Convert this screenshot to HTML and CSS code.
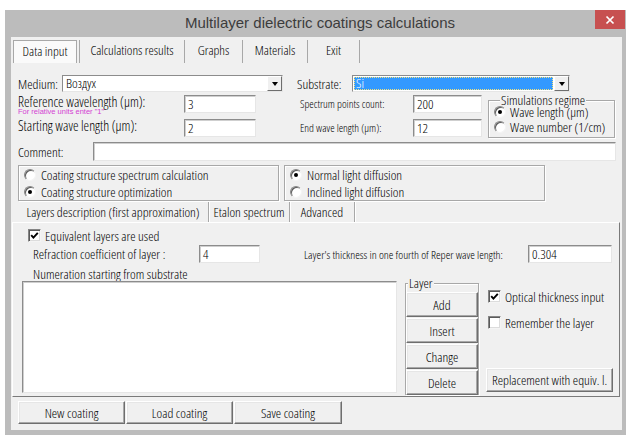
FILE: index.html
```html
<!DOCTYPE html>
<html>
<head>
<meta charset="utf-8">
<title>Multilayer dielectric coatings calculations</title>
<link rel="stylesheet" href="styles.css">
</head>
<body>
<div class="window">
  <div class="titlebar">
    <span class="title">Multilayer dielectric coatings calculations</span>
    <span class="close"><svg width="10" height="10" viewBox="0 0 10 10"><path d="M1.5 1.5L8.5 8.5M8.5 1.5L1.5 8.5" stroke="#fff" stroke-width="1.7"/></svg></span>
  </div>
  <div class="client">
    <div class="tabs">
      <div class="tab active">Data input</div>
      <div class="tab t2">Calculations results</div>
      <div class="tab t3">Graphs</div>
      <div class="tab t4">Materials</div>
      <div class="tab t5">Exit</div>
    </div>

    <div class="page">
      <div class="row-medium">
        <span class="w-medium">Medium:</span>
        <div class="combo combo-medium"><span class="combo-text">Воздух</span><span class="combo-btn"><i class="arrow"></i></span></div>
        <span class="w-substrate">Substrate:</span>
        <div class="combo combo-substrate"><span class="combo-text sel">Si</span><span class="combo-btn"><i class="arrow"></i></span></div>
      </div>

      <div class="params">
        <div class="a-ref"><span class="ref-lbl">Reference wavelength (µm):</span><span class="hint">For relative units enter "1"</span></div>
        <div class="edit a-refin">3</div>
        <span class="lbl-r a-spec">Spectrum points count:</span>
        <div class="edit a-specin">200</div>
        <div class="group a-sim">
          <span class="group-title">Simulations regime</span>
          <label class="opt opt-sim"><span class="radio on"></span>Wave length (µm)</label>
          <label class="opt opt-sim"><span class="radio"></span>Wave number (1/cm)</label>
        </div>
        <span class="ref-lbl a-start">Starting wave length (µm):</span>
        <div class="edit a-startin">2</div>
        <span class="lbl-r a-end">End wave length (µm):</span>
        <div class="edit a-endin">12</div>
      </div>

      <div class="row-comment">
        <span class="w-comment">Comment:</span>
        <div class="edit comment-in"></div>
      </div>

      <div class="modes">
        <div class="group mode1">
          <label class="opt"><span class="radio"></span>Coating structure spectrum calculation</label>
          <label class="opt"><span class="radio on"></span>Coating structure optimization</label>
        </div>
        <div class="group mode2">
          <label class="opt"><span class="radio on"></span>Normal light diffusion</label>
          <label class="opt"><span class="radio"></span>Inclined light diffusion</label>
        </div>
      </div>

      <div class="subtabs">
        <div class="subtab active s1">Layers description (first approximation)</div>
        <div class="subtab s2">Etalon spectrum</div>
        <div class="subtab s3">Advanced</div>
      </div>

      <div class="panel">
        <label class="chk-row eq-row"><span class="check"><svg width="9" height="9" viewBox="0 0 9 9"><path d="M1.2 4.2L3.4 6.6L7.8 1.8" fill="none" stroke="#000" stroke-width="1.9"/></svg></span>Equivalent layers are used</label>

        <div class="refr-row">
          <span class="w-refr">Refraction coefficient of layer :</span>
          <div class="edit refr-in">4</div>
          <span class="w-thick">Layer's thickness in one fourth of Reper wave length:</span>
          <div class="edit thick-in">0.304</div>
        </div>

        <div class="num-lbl">Numeration starting from substrate</div>

        <div class="layers-area">
          <div class="listbox"></div>
          <div class="group layer-group">
            <span class="group-title">Layer</span>
            <div class="btn lbtn">Add</div>
            <div class="btn lbtn">Insert</div>
            <div class="btn lbtn">Change</div>
            <div class="btn lbtn">Delete</div>
          </div>
          <div class="right-col">
            <label class="chk-row opt-chk"><span class="check"><svg width="9" height="9" viewBox="0 0 9 9"><path d="M1.2 4.2L3.4 6.6L7.8 1.8" fill="none" stroke="#000" stroke-width="1.9"/></svg></span>Optical thickness input</label>
            <label class="chk-row rem-chk"><span class="check"></span>Remember the layer</label>
            <div class="btn replace">Replacement with equiv. l.</div>
          </div>
        </div>
      </div>

      <div class="bottom-btns">
        <div class="btn bb1">New coating</div>
        <div class="btn bb2">Load coating</div>
        <div class="btn bb3">Save coating</div>
      </div>
    </div>
  </div>
</div>
</body>
</html>
```

FILE: styles.css
```css
* { box-sizing: border-box; }

html, body {
  margin: 0;
  padding: 0;
  background: #fff;
}

body {
  font-family: "Open Sans", "Liberation Sans", Arial, sans-serif;
  font-stretch: 75%;
  font-weight: 300;
  font-size: 13.5px;
  color: #000;
  white-space: nowrap;
}

label { cursor: default; }

/* window frame */
.window {
  margin: 10px 0 0 5px;
  width: 621px;
  height: 425px;
  background: #bcbcbc;
  display: flex;
  flex-direction: column;
}

.titlebar {
  height: 27px;
  flex: none;
  display: flex;
  align-items: flex-start;
}

.title {
  flex: 1;
  text-align: center;
  padding-left: 40px;
  font-family: "Liberation Sans", Arial, sans-serif;
  font-stretch: 100%;
  font-weight: 400;
  font-size: 15px;
  line-height: 26px;
  color: #3c3c3c;
}

.close {
  width: 30px;
  height: 19px;
  margin-right: 1px;
  background: #c75050;
  display: flex;
  align-items: center;
  justify-content: center;
}

.client {
  flex: 1;
  margin: 0 4px 5px 6px;
  background: #f0f0f0;
  display: flex;
  flex-direction: column;
}

/* main tab strip */
.tabs {
  height: 26px;
  flex: none;
  display: flex;
  align-items: flex-end;
  padding-left: 2px;
  font-size: 13.3px;
}

.tab {
  height: 23px;
  line-height: 21px;
  text-align: center;
  border-right: 1px solid #a8a8a8;
}

.tab.active {
  width: 64px;
  border: 1px solid #a8a8a8;
  border-bottom: none;
  background: #fafafa;
}

.tab.t2 { width: 106px; margin-left: 2px; border-left: 1px solid #a8a8a8; }
.tab.t3 { width: 58px; }
.tab.t4 { width: 65px; }
.tab.t5 { width: 52px; }

.page {
  flex: 1;
  padding-left: 7px;
  display: flex;
  flex-direction: column;
}

/* common controls */
.edit {
  height: 18px;
  background: #fff;
  border: 1px solid;
  border-color: #8c8c8c #e6e6e6 #e6e6e6 #8c8c8c;
  box-shadow: inset 1px 1px 0 #cfcfcf;
  padding-left: 3px;
  line-height: 16px;
}

.combo {
  height: 17px;
  display: flex;
  background: #fff;
  border: 1px solid;
  border-color: #8c8c8c #e6e6e6 #e6e6e6 #8c8c8c;
}

.combo-text {
  flex: 1;
  padding-left: 3px;
  line-height: 15px;
}

.combo-text.sel {
  margin: 1px;
  padding-left: 2px;
  line-height: 13px;
  background: #3399ff;
  color: #fff;
  outline: 1px dotted #f3e27a;
  outline-offset: -1px;
}

.combo-btn {
  width: 15px;
  flex: none;
  background: #f0f0f0;
  border: 1px solid;
  border-color: #fff #6e6e6e #6e6e6e #fff;
  display: flex;
  align-items: center;
  justify-content: center;
}

.arrow {
  width: 0;
  height: 0;
  border-left: 3.5px solid transparent;
  border-right: 3.5px solid transparent;
  border-top: 4px solid #000;
}

.group {
  border: 1px solid #a8a8a8;
  box-shadow: inset 1px 1px 0 #fff, 1px 1px 0 #fff;
}

.group-title {
  display: block;
  width: max-content;
  margin: -6px 0 -1px 6px;
  padding: 0 1px;
  line-height: 10px;
  background: #f0f0f0;
}

.opt {
  display: flex;
  align-items: center;
  gap: 5px;
  height: 17px;
}

.radio {
  width: 12px;
  height: 12px;
  flex: none;
  border-radius: 50%;
  background: #fff;
  border: 1px solid;
  border-color: #858585 #f4f4f4 #f4f4f4 #858585;
  box-shadow: inset 1px 1px 0 #5a5a5a;
  display: inline-flex;
  align-items: center;
  justify-content: center;
}

.radio.on::after {
  content: "";
  width: 4px;
  height: 4px;
  border-radius: 50%;
  background: #000;
}

.check {
  width: 13px;
  height: 13px;
  flex: none;
  background: #fff;
  border: 1px solid;
  border-color: #858585 #f4f4f4 #f4f4f4 #858585;
  box-shadow: inset 1px 1px 0 #5a5a5a, inset -1px -1px 0 #dcdcdc;
  display: inline-flex;
  align-items: center;
  justify-content: center;
}

.btn {
  background: #f0f0f0;
  border: 1px solid;
  border-color: #fff #6e6e6e #6e6e6e #fff;
  box-shadow: inset -1px -1px 0 #a8a8a8, inset 1px 1px 0 #e6e6e6;
  display: flex;
  align-items: center;
  justify-content: center;
}

/* Medium / Substrate row */
.row-medium {
  display: flex;
  align-items: center;
  height: 17px;
  margin-top: 12px;
  flex: none;
}

.w-medium { width: 44px; }
.combo-medium { width: 221px; }
.w-substrate { width: 55px; margin-left: 14px; }
.combo-substrate { width: 218px; }

/* wavelength parameters */
.params {
  display: grid;
  grid-template-columns: 166px 72px 44px 113px 69px 6px 127px;
  grid-template-rows: 18px 18px;
  row-gap: 6px;
  grid-template-areas:
    "ref refin . spec specin . sim"
    "start startin . end endin . sim";
  margin-top: 3px;
  flex: none;
}

.a-ref { grid-area: ref; display: flex; flex-direction: column; }
.a-refin { grid-area: refin; }
.a-spec { grid-area: spec; }
.a-specin { grid-area: specin; }
.a-sim { grid-area: sim; align-self: start; margin-top: 5px; height: 38px; padding-left: 5px; }
.a-start { grid-area: start; line-height: 14px; }
.a-startin { grid-area: startin; }
.a-end { grid-area: end; }
.a-endin { grid-area: endin; }

.ref-lbl { line-height: 13px; font-size: 14px; }

.lbl-r {
  align-self: center;
  line-height: 14px;
  font-size: 11.2px;
}

.hint {
  font-family: "Liberation Sans", Arial, sans-serif;
  font-stretch: 100%;
  font-weight: 400;
  font-size: 7.5px;
  line-height: 7px;
  color: #d43fd4;
}

.opt-sim { height: 15px; font-size: 13.6px; gap: 4px; }

/* comment */
.row-comment {
  display: flex;
  align-items: center;
  margin-top: 5px;
  height: 19px;
  flex: none;
}

.w-comment { width: 75px; }
.comment-in { width: 523px; height: 19px; }

/* calculation mode groups */
.modes {
  display: flex;
  margin-top: 4px;
  height: 36px;
  flex: none;
}

.mode1 { width: 261px; padding-left: 5px; }
.mode2 { width: 261px; margin-left: 5px; padding-left: 5px; }

/* layer tabs */
.subtabs {
  display: flex;
  height: 20px;
  margin-top: 1px;
  flex: none;
}

.subtab {
  line-height: 20px;
  text-align: center;
  border-right: 1px solid #a8a8a8;
  box-shadow: 1px 0 0 #fff;
}

.s1 { width: 191px; }
.s2 { width: 81px; }
.s3 { width: 65px; }

.panel {
  margin-left: -6px;
  width: 608px;
  height: 175px;
  flex: none;
  border: 1px solid;
  border-color: #fff #7a7a7a #7a7a7a #fff;
  display: flex;
  flex-direction: column;
}

.chk-row {
  display: flex;
  align-items: center;
  gap: 4px;
  height: 13px;
}

.eq-row { margin-top: 6px; padding-left: 15px; }

.refr-row {
  display: flex;
  align-items: center;
  height: 18px;
  margin-top: 3px;
  padding-left: 20px;
}

.w-refr { width: 166px; }
.refr-in { width: 61px; }
.w-thick { width: 224px; margin-left: 44px; font-size: 11.7px; }
.thick-in { width: 84px; }

.num-lbl {
  margin-top: 5px;
  padding-left: 20px;
  line-height: 13px;
}

.layers-area {
  display: flex;
  height: 114px;
  padding-left: 9px;
}

.listbox {
  width: 375px;
  height: 112px;
  background: #fff;
  border: 1px solid;
  border-color: #8c8c8c #e6e6e6 #e6e6e6 #8c8c8c;
  box-shadow: inset 1px 1px 0 #cfcfcf;
}

.layer-group {
  width: 74px;
  height: 112px;
  margin: 2px 0 0 8px;
  display: flex;
  flex-direction: column;
  gap: 1px;
}

.layer-group .group-title { margin-left: 2px; margin-bottom: 3px; }

.lbtn { height: 25px; flex: none; }

.right-col {
  width: 127px;
  margin-left: 7px;
  display: flex;
  flex-direction: column;
}

.opt-chk { margin-top: 9px; padding-left: 2px; }
.rem-chk { margin-top: 13px; padding-left: 2px; }

.replace {
  margin-top: auto;
  margin-bottom: 3px;
  height: 24px;
}

/* coating file buttons */
.bottom-btns {
  display: flex;
  gap: 1px;
  margin-top: 4px;
  height: 23px;
  flex: none;
}

.bb1 { width: 107px; }
.bb2 { width: 107px; }
.bb3 { width: 108px; }
```
